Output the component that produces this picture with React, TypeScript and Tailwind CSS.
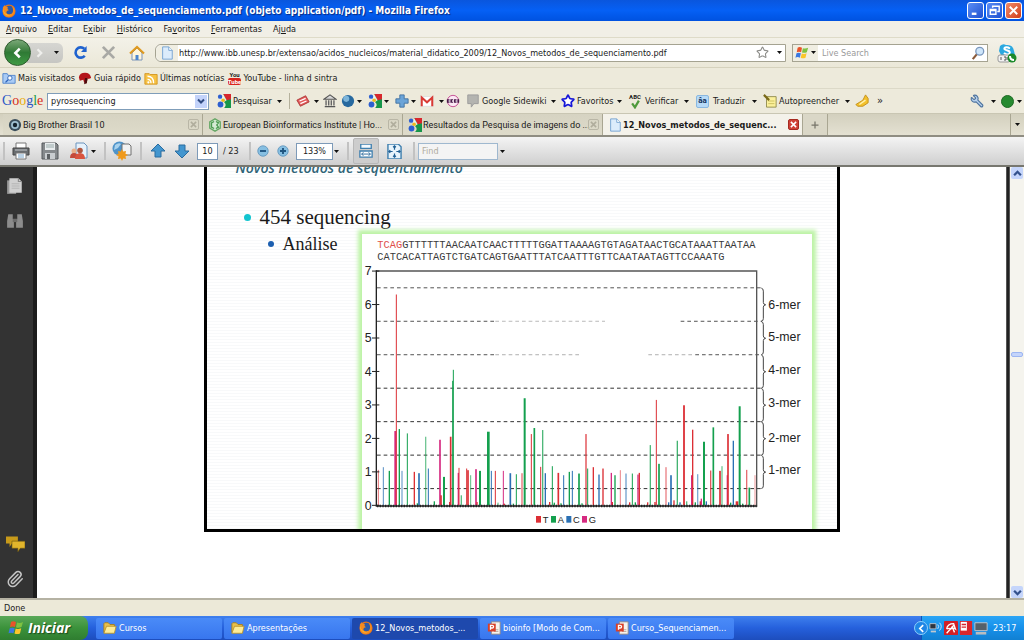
import type { ReactNode } from "react";
import { Paperclip, Star, Wrench } from "lucide-react";

type Base = "T" | "A" | "C" | "G";

const baseColor: Record<Base, string> = {
  T: "#dc2f35",
  A: "#14a04e",
  C: "#2a70b4",
  G: "#d62a80",
};

// [x, signal, bar width, base, opacity]
const bars: [number, number, number, Base, number?][] = [
  [49, 1.06, 3, "T", 0.7], [64, 1.14, 3, "C", 0.8], [82, 1.03, 4, "A"], [100, 2.22, 6, "G"], [103, 6.3, 3, "T"],
  [112, 2.28, 4, "A"], [120, 1.03, 4, "C", 0.6], [136, 2.15, 3, "A"], [157, 1, 4, "T"], [166, 0.06, 4, "A"],
  [171, 0.96, 5, "C"], [191, 2.05, 4, "A", 0.6], [199, 1.1, 3, "C"], [217, 0.12, 4, "A"], [234, 1.96, 5, "G"],
  [237, 0.3, 5, "T"], [246, 0.85, 6, "A"], [263, 0.1, 4, "T"], [266, 2.05, 5, "T"], [272, 3.72, 3, "A"],
  [274, 4.05, 3, "A"], [289, 0.97, 4, "G"], [291, 1.12, 3, "T"], [298, 0.3, 4, "A", 0.7], [314, 1.1, 3, "T"],
  [318, 1.05, 5, "T"], [326, 0.9, 3, "A", 0.7], [342, 1.08, 5, "G"], [345, 0.1, 4, "T"], [354, 1.03, 6, "A"],
  [379, 2.2, 8, "A"], [388, 1.03, 3, "C"], [400, 1.03, 3, "T"], [408, 0.08, 4, "A", 0.6], [424, 1.03, 3, "G"],
  [427, 0.05, 4, "T"], [445, 0.96, 5, "C"], [454, 0.05, 4, "A"], [463, 0.93, 3, "A"], [480, 0.96, 5, "T", 0.55],
  [488, 3.2, 6, "A"], [508, 2.13, 3, "T"], [517, 2.31, 5, "A"], [536, 1.15, 3, "T"], [542, 2.25, 4, "A", 0.75],
  [550, 0.96, 4, "C"], [563, 0.1, 4, "T"], [571, 1.17, 3, "A"], [577, 0.08, 4, "A"], [589, 0.97, 5, "T"],
  [597, 0.06, 4, "A"], [605, 0.9, 3, "C"], [622, 1, 4, "A"], [631, 1.03, 3, "C"], [651, 0.95, 5, "A"],
  [660, 0.06, 4, "A"], [672, 2.13, 6, "T", 0.6], [677, 1.1, 3, "A"], [694, 1.14, 4, "T"], [711, 0.92, 4, "C"],
  [723, 1.1, 4, "T"], [748, 0.97, 4, "G"], [751, 0.1, 4, "T"], [759, 0.9, 4, "A"], [775, 1.05, 3, "T", 0.6],
  [792, 0.95, 4, "C", 0.65], [803, 0.09, 4, "T"], [811, 0.95, 3, "A"], [820, 0.09, 4, "A"], [828, 0.92, 4, "G"],
  [832, 0.97, 4, "T"], [857, 0.09, 4, "T"], [865, 1.8, 4, "A", 0.75], [879, 0.1, 4, "T"], [883, 3.15, 3, "T"],
  [891, 1.24, 5, "A"], [912, 1.14, 4, "T", 0.6], [920, 0.09, 4, "C"], [927, 0.9, 5, "C"], [936, 0.15, 4, "T"],
  [946, 1.93, 4, "A", 0.8], [954, 0.09, 4, "C"], [966, 2.99, 6, "T", 0.9], [974, 0.12, 4, "A", 0.7],
  [989, 0.9, 4, "G"], [992, 2.26, 4, "T"], [1000, 0.09, 4, "A"], [1007, 0.93, 4, "C", 0.6], [1015, 0.12, 4, "T"],
  [1018, 0.2, 4, "G"], [1026, 1.9, 6, "A"], [1033, 0.12, 4, "C"], [1046, 1.04, 4, "T", 0.8], [1054, 2.33, 5, "A"],
  [1074, 1.03, 6, "T", 0.85], [1080, 1.17, 4, "A", 0.6], [1096, 0.9, 4, "G"], [1098, 2.13, 5, "T"],
  [1106, 0.08, 4, "A"], [1114, 1.93, 4, "C"], [1125, 0.12, 8, "T"], [1133, 2.96, 6, "A"], [1142, 0.05, 4, "A"],
  [1154, 1.06, 4, "T", 0.7], [1162, 0.53, 5, "A"], [1179, 0.9, 3, "T", 0.5],
];

const yOf = (v: number) => 814 - v * 100.4;

const merLabels = [
  { text: "6-mer", y: 226 },
  { text: "5-mer", y: 322 },
  { text: "4-mer", y: 419 },
  { text: "3-mer", y: 518 },
  { text: "2-mer", y: 623 },
  { text: "1-mer", y: 719 },
];

const legend: { base: Base; x: number }[] = [
  { base: "T", x: 522 },
  { base: "A", x: 567 },
  { base: "C", x: 613 },
  { base: "G", x: 660 },
];

function Pyrogram() {
  return (
    <svg viewBox="0 0 1350 885" className="block w-full">
      <g fontSize="31" fontFamily="'Liberation Mono', monospace" fill="#3a3a3a">
        <text x="46" y="41">
          <tspan fill="#e0504a">TCAG</tspan>GTTTTTTAACAATCAACTTTTTGGATTAAAAGTGTAGATAACTGCATAAATTAATAA
        </text>
        <text x="46" y="77">CATCACATTAGTCTGATCAGTGAATTTATCAATTTGTTCAATAATAGTTCCAAATG</text>
      </g>
      {/* threshold lines */}
      <g stroke="#555" strokeWidth="3" strokeDasharray="11 9">
        <path d={`M45 ${yOf(6.5)}H1200`} />
        <path d={`M45 ${yOf(5.5)}H400M956 ${yOf(5.5)}H1200`} />
        <path d={`M400 ${yOf(5.5)}H729`} opacity="0.4" />
        <path d={`M45 ${yOf(4.5)}H400M1000 ${yOf(4.5)}H1200`} />
        <path d={`M400 ${yOf(4.5)}H654M859 ${yOf(4.5)}H1000`} opacity="0.45" />
        {[3.5, 2.5, 1.5, 0.5].map((v) => (
          <path key={v} d={`M45 ${yOf(v)}H1200`} stroke="#333" />
        ))}
      </g>
      {bars.map(([x, v, w, base, o = 1], i) => (
        <rect key={i} x={x - w / 2} y={yOf(v)} width={w} height={814 - yOf(v)} fill={baseColor[base]} opacity={o} />
      ))}
      <path d="M43 111H1184V814" fill="none" stroke="#555" strokeWidth="4" />
      <path d="M43 109V816H1186" fill="none" stroke="#222" strokeWidth="4" />
      <path d="M45 816H1184" stroke="#222" strokeWidth="8" strokeDasharray="4 4" />
      <g fontSize="37" fontFamily="'Liberation Sans', sans-serif" fill="#222">
        {[0, 1, 2, 3, 4, 5, 6, 7].map((n) => (
          <g key={n}>
            <path d={`M30 ${yOf(n)}H52`} stroke="#222" strokeWidth="3" />
            <text x="8" y={yOf(n) + 13}>{n}</text>
          </g>
        ))}
        {merLabels.map((m, i) => {
          const top = yOf(6.5 - i);
          return (
            <g key={m.text}>
              <path
                d={`M1198 ${top + 1}q6 1 6 9v34q0 6 7 7q-7 1-7 7v34q0 8-6 8`}
                fill="none"
                stroke="#444"
                strokeWidth="3"
              />
              <text x="1219" y={m.y}>{m.text}</text>
            </g>
          );
        })}
      </g>
      <g fontSize="28" fontFamily="'Liberation Sans', sans-serif" fill="#222">
        {legend.map((l) => (
          <g key={l.base}>
            <rect x={l.x} y="846" width="15" height="20" fill={baseColor[l.base]} />
            <text x={l.x + 20} y="866">{l.base}</text>
          </g>
        ))}
      </g>
    </svg>
  );
}

/* ---------- icons ---------- */

function Caret({ className = "" }: { className?: string }) {
  return (
    <svg viewBox="0 0 5 3" className={`h-[3px] w-[5px] shrink-0 ${className}`}>
      <path d="M0 0h5L2.500 3z" fill="#111" />
    </svg>
  );
}

function Icon({ children, size = "size-[14px]", box = "0 0 16 16" }: { children: ReactNode; size?: string; box?: string }) {
  return (
    <svg viewBox={box} className={`${size} shrink-0`} fill="none">
      {children}
    </svg>
  );
}

function FirefoxIcon() {
  return (
    <Icon>
      <circle cx="8" cy="8" r="7.500" fill="#e8751a" />
      <circle cx="8.500" cy="7" r="5" fill="#2c5aa8" />
      <path d="M1 4c1-2 2-2 2-3 1 2 2 2 4 3-1 1-1 2 1 3-2 0-3 1-3 3 1 2 5 3 7 0 1-2 1-5-1-8 4 2 5 8 1 11-4 4-11 2-11-5z" fill="#f58a1f" />
      <path d="M1 5c1 5 5 9 10 7-4 3-10 0-10-7z" fill="#fbc02d" />
    </Icon>
  );
}

function GoogleIcon() {
  return (
    <Icon>
      <path d="M7 0h9v16H8c3-3 2-5 0-7z" fill="#17964a" />
      <path d="M7 0h9v6l-5 1z" fill="#d8272d" />
      <path d="M7 0l4 7-3 2-2-3z" fill="#fff" opacity="0.85" />
      <circle cx="3.500" cy="3" r="2.500" fill="#2d5fd0" />
      <circle cx="7" cy="7" r="2" fill="#f0b81c" />
      <circle cx="4" cy="12" r="3.300" fill="#2d5fd0" />
    </Icon>
  );
}

function PageIcon() {
  return (
    <Icon>
      <path d="M3 1h7l4 4v10H3z" fill="#dcecfb" stroke="#6f9fd0" />
      <path d="M10 1v4h4" fill="#fff" stroke="#6f9fd0" />
    </Icon>
  );
}

function FolderIcon() {
  return (
    <Icon>
      <path d="M1 3l1-1h4l2 2h5v9H1z" fill="#e9c04c" stroke="#a57e1a" />
      <path d="M4 6h11l-2 8H1z" fill="#fdec98" stroke="#b8922c" />
    </Icon>
  );
}

function PptIcon() {
  return (
    <Icon>
      <path d="M5 1h10v14H5z" fill="#f7f3ee" stroke="#9a8a80" />
      <path d="M8 10h5M8 12h5" stroke="#b5a59a" />
      <rect x="1" y="3" width="9" height="9" fill="#d8402a" />
      <path d="M4 10V5h2a1.500 1.500 0 010 3H4" stroke="#fff" strokeWidth="1.500" />
    </Icon>
  );
}

function WindowsFlag({ size }: { size?: string }) {
  return (
    <Icon size={size}>
      <path d="M3 2q2-1.500 5 0L7 7Q4.500 6 2 7z" fill="#e9532a" />
      <path d="M9 2.500q3 1 6-.5l-1.500 5q-3 1.500-5.500.3z" fill="#7fc241" />
      <path d="M1.700 8.300q2.500-1.300 5 0l-1.200 5q-2.500-1.300-5 0z" fill="#3b78e0" />
      <path d="M7.700 8.500q2.800 1.200 5.500-.2L12 13.500q-3 1.200-5.500 0z" fill="#fbc62a" />
    </Icon>
  );
}

/* ---------- browser chrome ---------- */

function TitleBar() {
  return (
    <header className="flex h-[21px] shrink-0 items-center gap-[4px] bg-linear-to-b from-[#0a56dd] via-[#0560f5] to-[#0052e0] px-[2px] text-[10px] font-bold text-white">
      <FirefoxIcon />
      <h1 className="flex-1 truncate [text-shadow:1px_1px_1px_#0a2a80]">
        12_Novos_metodos_de_sequenciamento.pdf (objeto application/pdf) - Mozilla Firefox
      </h1>
      <div className="flex gap-[2px]">
        <button aria-label="Minimizar" className="size-[17px] rounded-[3px] border border-white bg-linear-to-br from-[#5b8df5] to-[#1f4fd0]">
          <Icon size="size-[15px]"><path d="M4 11.500h5" stroke="#fff" strokeWidth="2.500" /></Icon>
        </button>
        <button aria-label="Restaurar" className="size-[17px] rounded-[3px] border border-white bg-linear-to-br from-[#5b8df5] to-[#1f4fd0]">
          <Icon size="size-[15px]"><path d="M6 5V3.500h7V9h-2M3.500 7h6v5h-6zM3.500 8h6" stroke="#fff" strokeWidth="1.500" /></Icon>
        </button>
        <button aria-label="Fechar" className="size-[17px] rounded-[3px] border border-white bg-linear-to-br from-[#f08a68] to-[#d03a12]">
          <Icon size="size-[15px]"><path d="M4 4l8 8M12 4l-8 8" stroke="#fff" strokeWidth="2" /></Icon>
        </button>
      </div>
    </header>
  );
}

const menus = [
  ["", "A", "rquivo"],
  ["", "E", "ditar"],
  ["E", "x", "ibir"],
  ["", "H", "istórico"],
  ["Fa", "v", "oritos"],
  ["", "F", "erramentas"],
  ["Aj", "u", "da"],
];

function MenuBar() {
  return (
    <nav className="flex h-[17px] shrink-0 items-center gap-[11px] border-b border-[#dedbc8] bg-[#f1efe6] px-[6px]">
      {menus.map(([pre, key, post]) => (
        <button key={pre + key + post}>
          {pre}<span className="underline">{key}</span>{post}
        </button>
      ))}
    </nav>
  );
}

function NavBar() {
  return (
    <div className="flex h-[30px] shrink-0 items-center border-b border-[#d6d2bd] bg-linear-to-b from-[#f3f1e8] to-[#ebe8d8] pr-[7px] pl-[4px]">
      <button aria-label="Voltar" className="z-10 flex size-[27px] items-center justify-center rounded-full border border-[#2d5a2d] bg-linear-to-b from-[#7aa878] via-[#2f7a35] to-[#3f9a44]">
        <Icon><path d="M10 3L5 8l5 5" stroke="#fff" strokeWidth="3" /></Icon>
      </button>
      <div className="-ml-[4px] flex h-[20px] w-[36px] items-center rounded-r-md bg-linear-to-b from-[#d6d6d2] to-[#c6c6c2]">
        <button aria-label="Avançar" className="flex w-[24px] justify-center">
          <Icon size="size-[12px]"><path d="M6 3l5 5-5 5" stroke="#efefec" strokeWidth="3" /></Icon>
        </button>
        <Caret className="ml-[3px]" />
      </div>
      <button aria-label="Recarregar" className="ml-[10px]">
        <Icon size="size-[15px]">
          <path d="M12.500 11.500a5.500 5.500 0 11-.5-7.500" stroke="#1f62cf" strokeWidth="2.800" />
          <path d="M14.500 1v6.500H8.500z" fill="#1f62cf" />
        </Icon>
      </button>
      <button aria-label="Parar" className="ml-[13px]">
        <Icon size="size-[15px]"><path d="M2 2l12 12M14 2L2 14" stroke="#a9a9a5" strokeWidth="3" /></Icon>
      </button>
      <button aria-label="Página inicial" className="ml-[13px]">
        <Icon size="size-[16px]">
          <path d="M3 8v7h10V8L8 3z" fill="#fff6dc" stroke="#7a93b8" />
          <path d="M1 8.500L8 2l7 6.500" stroke="#e09a1f" strokeWidth="2.200" />
          <path d="M6.500 10h3v5h-3z" fill="#4b86cf" />
        </Icon>
      </button>
      <div className="ml-[10px] flex h-[18px] flex-1 items-center rounded-l-md border border-[#a5a391] bg-white pr-[3px]">
        <div className="flex h-full items-center rounded-l-md bg-[#f0eee2] px-[4px]"><PageIcon /></div>
        <input
          aria-label="Endereço"
          className="ml-[1px] min-w-0 flex-1 bg-transparent outline-none"
          defaultValue="http://www.ibb.unesp.br/extensao/acidos_nucleicos/material_didatico_2009/12_Novos_metodos_de_sequenciamento.pdf"
        />
        <Star className="size-[13px] fill-white text-[#8c8c88]" strokeWidth={2} />
        <Caret className="ml-[8px]" />
      </div>
      <div className="ml-[6px] flex h-[18px] w-[196px] items-center border border-[#a5a391] bg-white pr-[2px]">
        <div className="flex h-full items-center bg-[#f0eee2] pr-[2px] pl-[2px]">
          <WindowsFlag />
          <Caret className="ml-[2px]" />
        </div>
        <input aria-label="Pesquisa" placeholder="Live Search" className="ml-[4px] min-w-0 flex-1 outline-none placeholder:text-[#9a9a9a]" />
        <Icon>
          <path d="M7 9L2 15" stroke="#8a5a3a" strokeWidth="2.500" />
          <circle cx="10" cy="6" r="4.500" fill="#cfe6fa" stroke="#7b98bd" strokeWidth="1.500" />
        </Icon>
      </div>
      <button aria-label="Skype" className="ml-[9px]">
        <Icon size="size-[20px]" box="0 0 20 20">
          <path d="M3 3q3-3 6-1 7-1 8 6l1 4H4L2 8z" fill="#2aa8e0" />
          <path d="M13 5.500C9 3 6 5 8 6.500s6 1 4.500 4c-1 1.500-4 1-5.500-.5" stroke="#fff" strokeWidth="2" />
          <rect x="1" y="12" width="12" height="7" rx="2" fill="#f2f2f2" stroke="#999" />
          <path d="M4 14v3M7 14h2v3H7M11 14v3" stroke="#555" />
          <circle cx="15" cy="15" r="4.500" fill="#1c8a2a" />
          <path d="M13 13q0 4 4 4" stroke="#fff" strokeWidth="2" />
        </Icon>
      </button>
    </div>
  );
}

function BookmarksBar() {
  return (
    <nav className="flex h-[21px] shrink-0 items-center gap-[3px] border-b border-[#dcd9c8] bg-[#edeadb] px-[2px]">
      <a href="#visitados" className="flex items-center gap-[2px]">
        <Icon>
          <path d="M1 3h5l1 2h8v9H1z" fill="#a9cbf5" stroke="#4a80cc" />
          <circle cx="9" cy="8" r="2.500" fill="#fff" stroke="#2c62b8" />
          <path d="M7 10l-3 3" stroke="#2c62b8" strokeWidth="1.500" />
        </Icon>
        Mais visitados
      </a>
      <a href="#guia" className="flex items-center gap-[2px]">
        <Icon>
          <path d="M1 7q1-5 7-5 6 0 7 6l-3 1-1-1-1 6-3-1-1-3-4 1z" fill="#b3141a" />
          <path d="M8 8l3 0-1 6-3 1z" fill="#4c0a0c" />
        </Icon>
        Guia rápido
      </a>
      <a href="#noticias" className="flex items-center gap-[2px]">
        <Icon>
          <path d="M1 3h5l1 1h8v11H1z" fill="#f6c244" stroke="#d2941c" />
          <path d="M4 6q7 0 7 8M4 9.500q4 0 4 4.500" stroke="#fff" strokeWidth="1.500" />
          <circle cx="5" cy="13" r="1.200" fill="#fff" />
        </Icon>
        Últimas notícias
      </a>
      <a href="#youtube" className="flex items-center gap-[2px]">
        <span className="flex w-[14px] flex-col items-center font-['Roboto',sans-serif] text-[6px] leading-[7px] font-bold">
          <span>You</span>
          <span className="rounded-xs bg-[#d9251d] text-white">Tube</span>
        </span>
        YouTube - linha d sintra
      </a>
    </nav>
  );
}

function GoogleBar() {
  return (
    <div className="flex h-[24px] shrink-0 items-center bg-[#edeadb] pr-[2px] pl-[2px]">
      <span className="w-[45px] font-['Liberation_Serif',serif] text-[14px] leading-[18px]">
        <span className="text-[#2a56c6]">G</span>
        <span className="text-[#d62d20]">o</span>
        <span className="text-[#e8ac0c]">o</span>
        <span className="text-[#2a56c6]">g</span>
        <span className="text-[#1e9a48]">l</span>
        <span className="text-[#d62d20]">e</span>
      </span>
      <div className="flex h-[17px] w-[162px] items-center border border-[#7f9db9] bg-white p-px">
        <input aria-label="Busca Google" defaultValue="pyrosequencing" className="min-w-0 flex-1 px-[2px] outline-none" />
        <button aria-label="Histórico de busca" className="flex h-full w-[12px] items-center justify-center bg-[#c3d3fa]">
          <Icon size="size-[8px]"><path d="M2 5l6 6 6-6" stroke="#2f4a80" strokeWidth="4" /></Icon>
        </button>
      </div>
      <button className="ml-[8px] flex w-[60px] items-center gap-[2px]">
        <GoogleIcon />
        Pesquisar
      </button>
      <Caret />
      <span className="ml-[7px] h-[16px] w-px bg-[#b5b19c]" />
      <button aria-label="Cupons" className="ml-[6px] flex items-center gap-[4px]">
        <Icon>
          <path d="M1 7l10-5 4 7-10 5z" fill="#e25a5a" stroke="#a33" />
          <path d="M4 8l7-3M5 11l7-3" stroke="#fff" strokeWidth="1.500" />
        </Icon>
        <Caret />
      </button>
      <button aria-label="PageRank" className="ml-[4px]">
        <Icon>
          <path d="M1 6l7-5 7 5zM2 14.500h12" fill="#d8d8d8" stroke="#555" strokeWidth="1.300" />
          <path d="M3.500 7v6M6.500 7v6M9.500 7v6M12.500 7v6" stroke="#666" strokeWidth="1.600" />
        </Icon>
      </button>
      <button aria-label="Earth" className="ml-[4px] flex items-center gap-[2px]">
        <Icon>
          <circle cx="8" cy="8" r="7" fill="#27699f" />
          <circle cx="6" cy="5.500" r="3.500" fill="#7db5da" />
        </Icon>
        <Caret />
      </button>
      <button aria-label="Google" className="ml-[6px] flex items-center gap-[2px]">
        <GoogleIcon />
        <Caret />
      </button>
      <button aria-label="Adicionar" className="ml-[6px] flex items-center gap-[2px]">
        <Icon><path d="M5.500 1h5v4.500H15v5h-4.500V15h-5v-4.500H1v-5h4.500z" fill="#6ba4d8" stroke="#3f6f9f" /></Icon>
        <Caret />
      </button>
      <button aria-label="Gmail" className="ml-[4px] flex items-center gap-[5px]">
        <Icon>
          <rect x="1" y="3" width="14" height="11" fill="#fff" stroke="#ddd" />
          <path d="M2 14V4l6 5.500L14 4v10" stroke="#d93a34" strokeWidth="2.300" />
        </Icon>
        <Caret />
      </button>
      <button aria-label="Orkut" className="ml-[2px]">
        <Icon>
          <circle cx="8" cy="8" r="6.500" fill="#fbe8f4" stroke="#c0408c" />
          <path d="M1 8h14" stroke="#4a1a4a" strokeWidth="4" strokeDasharray="3 1" />
          <path d="M3 8h1M7 8h1M11 8h1" stroke="#fff" strokeWidth="1.500" />
        </Icon>
      </button>
      <button className="ml-[6px] flex w-[85px] items-center gap-[2px]">
        <Icon><path d="M2 1h12v10H9l-3 4v-4H2z" fill="#b4b4b0" stroke="#999" /></Icon>
        Google Sidewiki
      </button>
      <Caret />
      <button className="ml-[5px] flex w-[56px] items-center gap-[2px]">
        <Star className="size-[14px] shrink-0 fill-white text-[#1717d8]" strokeWidth={3} />
        Favoritos
      </button>
      <Caret />
      <button className="ml-[6px] flex w-[56px] items-center gap-[3px]">
        <span className="flex w-[14px] shrink-0 flex-col items-center font-['Roboto',sans-serif] text-[6px] leading-[6px] font-bold">
          ABC
          <Icon size="size-[9px]"><path d="M2 6l5 7L14 1" stroke="#4f9a3c" strokeWidth="4" /></Icon>
        </span>
        Verificar
      </button>
      <Caret />
      <button className="ml-[7px] flex w-[56px] items-center gap-[4px]">
        <span className="flex size-[13px] shrink-0 items-center justify-center rounded-xs border border-[#8ab8e0] bg-[#b7daf7] font-['Roboto',sans-serif] text-[8px] font-bold text-[#12305a]">âa</span>
        Traduzir
      </button>
      <Caret />
      <button className="ml-[6px] flex w-[82px] items-center gap-[2px]">
        <Icon>
          <path d="M4 3h11v12H4z" fill="#fbf09a" stroke="#8d8748" />
          <path d="M6 8h7M6 11h7" stroke="#c9bd5c" />
          <path d="M1 1l6 6" stroke="#7a6a1a" strokeWidth="2.500" />
        </Icon>
        Autopreencher
      </button>
      <Caret />
      <button aria-label="Realçar" className="ml-[5px]">
        <Icon>
          <path d="M1 12L9 7l3-6 3 4v5l-6 4H3z" fill="#f3c12c" stroke="#c08c12" />
          <path d="M5 12l7-5" stroke="#fff3b0" strokeWidth="1.500" />
        </Icon>
      </button>
      <button className="ml-[8px] text-[11px]">»</button>
      <button aria-label="Configurações" className="ml-auto flex items-center gap-[7px]">
        <Wrench className="size-[14px] -scale-x-100 fill-[#b9d3ef] text-[#50759f]" />
        <Caret />
      </button>
      <button aria-label="Conta" className="ml-[5px] flex items-center gap-[3px]">
        <span className="size-[13px] rounded-full border border-[#1d6a24] bg-[#268a30]" />
        <Caret />
      </button>
    </div>
  );
}

interface TabProps {
  icon: ReactNode;
  title: string;
  active?: boolean;
}

function Tab({ icon, title, active }: TabProps) {
  return (
    <div
      className={`flex max-w-[200px] min-w-0 flex-1 items-center border-r border-[#a9a692] pr-[3px] pl-[5px] ${
        active ? "bg-[#f4f2ea] font-bold" : "bg-linear-to-b from-[#d6d3c2] to-[#dedbca] font-['Roboto',sans-serif]"
      }`}
    >
      <button role="tab" aria-selected={!!active} className="flex min-w-0 flex-1 items-center gap-px text-left">
        {icon}
        <span>{title}</span>
      </button>
      <button
        aria-label={`Fechar ${title}`}
        className={`flex size-[11px] shrink-0 items-center justify-center rounded-xs border ${
          active ? "border-[#a52a20] bg-[#cf4136] text-white" : "border-[#b9b6a6] text-[#b0ad9c]"
        }`}
      >
        <Icon size="size-[7px]"><path d="M2 2l12 12M14 2L2 14" stroke="currentColor" strokeWidth="3.500" /></Icon>
      </button>
    </div>
  );
}

function TabStrip() {
  return (
    <div role="tablist" className="flex h-[22px] shrink-0 border-t border-[#c9c6b3] bg-linear-to-b from-[#d3d0be] to-[#e4e1d2] pl-[3px]">
      <Tab
        title="Big Brother Brasil 10"
        icon={
          <Icon>
            <circle cx="8" cy="8" r="7" fill="#3b4f5c" />
            <circle cx="8" cy="8" r="4.500" fill="#9fc0d0" />
            <circle cx="8" cy="8" r="2.500" fill="#16242e" />
          </Icon>
        }
      />
      <Tab
        title="European Bioinformatics Institute | Ho..."
        icon={
          <Icon>
            <path d="M8 1l6 3.500v7L8 15l-6-3.500v-7z" fill="#d5ead5" stroke="#66a866" strokeWidth="1.500" />
            <path d="M7 4L4 5.500v5L7 12M9 4l3 1.500-2 2.500 2 2.500L9 12" stroke="#4a9a50" strokeWidth="1.500" />
          </Icon>
        }
      />
      <Tab title="Resultados da Pesquisa de imagens do ..." icon={<GoogleIcon />} />
      <Tab title="12_Novos_metodos_de_sequenc..." active icon={<PageIcon />} />
      <button aria-label="Nova aba" className="flex w-[25px] items-center justify-center border-r border-[#a9a692] bg-[#dad7c7]">
        <Icon size="size-[8px]"><path d="M8 1v14M1 8h14" stroke="#77756a" strokeWidth="2.500" /></Icon>
      </button>
      <button aria-label="Listar abas" className="ml-auto flex w-[14px] items-center justify-center border-l border-[#a9a692]">
        <Caret />
      </button>
    </div>
  );
}

/* ---------- pdf viewer ---------- */

function Grip({ className = "" }: { className?: string }) {
  return <span className={`h-[18px] w-[2px] shrink-0 bg-[#c2c2c2] ${className}`} />;
}

function PdfToolbar() {
  return (
    <div className="flex h-[32px] shrink-0 items-center border-t-2 border-b-2 border-t-[#8f8d82] border-b-[#77776f] bg-linear-to-b from-[#f4f4f4] to-[#cfcfcf]">
      <Grip className="ml-[3px]" />
      <button aria-label="Imprimir" className="ml-[7px]">
        <Icon size="size-[18px]" box="0 0 18 18">
          <path d="M4 1h10v6H4z" fill="#fff" stroke="#777" />
          <path d="M1 6h16v7H1z" fill="#696d70" stroke="#444" />
          <path d="M3 8h12" stroke="#c5c9cc" />
          <path d="M4 11h10v6H4z" fill="#fff" stroke="#777" />
          <path d="M6 13h6M6 15h6" stroke="#79a6cc" />
        </Icon>
      </button>
      <button aria-label="Salvar" className="ml-[11px]">
        <Icon size="size-[18px]" box="0 0 18 18">
          <path d="M1 1h14l2 2v14H1z" fill="#85898c" stroke="#55595c" />
          <path d="M4 1h10v7H4z" fill="#e8ecee" />
          <path d="M5 3h8M5 5h8" stroke="#9aa" />
          <path d="M4 11h10v6H4z" fill="#c9cdd0" />
          <path d="M6 12h3v5H6z" fill="#5c6063" />
        </Icon>
      </button>
      <button aria-label="Colaborar" className="ml-[11px] flex items-center gap-[3px]">
        <Icon size="size-[18px]" box="0 0 18 18">
          <path d="M6 1h8l3 3v12H6z" fill="#e6f1fb" stroke="#6a94bd" />
          <circle cx="4" cy="9" r="2.500" fill="#e9b08a" />
          <path d="M0 16q0-5 4-5t4 5z" fill="#c44a3a" />
          <circle cx="10" cy="8.500" r="2.800" fill="#b0563f" />
          <path d="M5 17q0-6 5-6t5 6z" fill="#d9543f" />
        </Icon>
        <Caret />
      </button>
      <Grip className="ml-[8px]" />
      <button aria-label="Criar PDF" className="ml-[6px]">
        <Icon size="size-[20px]" box="0 0 20 20">
          <circle cx="7.500" cy="7.500" r="7" fill="#4f93c9" />
          <path d="M3 4q4-3 6-1L6 7 2 9z" fill="#a8d2ee" />
          <path d="M10 3h7l2 2v9h-9z" fill="#f2f2f2" stroke="#707070" />
          <path d="M10 8l1.200 2.500 2.800-.5-.5 2.800L16 14l-2.500 1.200.5 2.800-2.800-.5L10 20l-1.200-2.500-2.800.5.5-2.800L4 14l2.500-1.200L6 10l2.800.5z" fill="#ef9a1d" />
        </Icon>
      </button>
      <Grip className="ml-[8px]" />
      <button aria-label="Página anterior" className="ml-[8px]">
        <Icon size="size-[16px]"><path d="M8 1l7 7h-4v6H5V8H1z" fill="#4396cf" stroke="#2a6c9f" /></Icon>
      </button>
      <button aria-label="Próxima página" className="ml-[8px]">
        <Icon size="size-[16px]"><path d="M8 15l7-7h-4V2H5v6H1z" fill="#4396cf" stroke="#2a6c9f" /></Icon>
      </button>
      <input aria-label="Página" defaultValue="10" className="ml-[7px] h-[17px] w-[21px] border border-[#7d9ab8] bg-white text-center outline-none" />
      <span className="ml-[5px] w-[26px] whitespace-pre">/ 23</span>
      <Grip />
      <button aria-label="Reduzir zoom" className="ml-[6px]">
        <Icon size="size-[12px]">
          <circle cx="8" cy="8" r="7" fill="#86bfe2" stroke="#5a8fb8" />
          <path d="M4 8h8" stroke="#1f5580" strokeWidth="2.500" />
        </Icon>
      </button>
      <button aria-label="Ampliar zoom" className="ml-[8px]">
        <Icon size="size-[12px]">
          <circle cx="8" cy="8" r="7" fill="#86bfe2" stroke="#5a8fb8" />
          <path d="M4 8h8M8 4v8" stroke="#1f5580" strokeWidth="2.500" />
        </Icon>
      </button>
      <select aria-label="Zoom" className="ml-[7px] h-[17px] w-[37px] appearance-none border border-[#7d9ab8] bg-white text-center">
        <option>133%</option>
      </select>
      <Caret className="ml-[1px]" />
      <Grip className="ml-[8px]" />
      <button aria-label="Ajustar largura" className="ml-[4px] flex size-[26px] items-center justify-center rounded-xs border border-[#b8b8b8] bg-[#cdcdcd]">
        <Icon>
          <path d="M2 0h12v5H2z" fill="#f5faff" stroke="#3f7fae" strokeWidth="1.500" />
          <path d="M1 8h14v7H1z" fill="#fff" stroke="#3f7fae" strokeWidth="1.500" />
          <path d="M3 11.500h10M5 9.500l-2 2 2 2M11 9.500l2 2-2 2" stroke="#1f5f94" />
        </Icon>
      </button>
      <button aria-label="Ajustar página" className="ml-[8px]">
        <Icon size="size-[15px]">
          <path d="M1 0h11l3 3v13H1z" fill="#e8f4fc" stroke="#3f7fae" strokeWidth="1.500" />
          <path d="M8 2v4M8 10v4M2 8h4M10 8h4M6.500 3.500L8 2l1.500 1.500M6.500 12.500L8 14l1.500-1.500M3.500 6.500L2 8l1.500 1.500M12.500 6.500L14 8l-1.500 1.500" stroke="#1f5f94" strokeWidth="1.300" />
        </Icon>
      </button>
      <Grip className="ml-[11px]" />
      <input aria-label="Localizar" placeholder="Find" className="ml-[3px] h-[17px] w-[80px] border border-[#9fb8cf] bg-[#f4f4f4] px-[3px] outline-none placeholder:text-[#b0aca0]" />
      <Caret className="ml-[2px]" />
    </div>
  );
}

function SidePanel() {
  return (
    <aside className="flex w-[37px] shrink-0 flex-col items-center border-r-4 border-[#1c1c1c] bg-[#333] pt-[10px] pr-[3px] pb-[10px]">
      <button aria-label="Páginas">
        <Icon size="size-[18px]">
          <path d="M1 3h8v12H1z" fill="#9a9a9a" />
          <path d="M3 1h8l3 3v10H3z" fill="#d0d0d0" />
          <path d="M11 1v3h3" stroke="#8a8a8a" />
          <path d="M5 6h7M5 8h7M5 10h7" stroke="#b5b5b5" />
        </Icon>
      </button>
      <button aria-label="Pesquisar" className="mt-[17px]">
        <Icon size="size-[18px]">
          <path d="M2 2h4v4l1 2v6H1V8zM10 2h4l1 6v6H9V8l1-2z" fill="#8c8c8c" />
          <path d="M6 6h4v3H6z" fill="#6c6c6c" />
        </Icon>
      </button>
      <button aria-label="Comentários" className="mt-auto">
        <Icon size="size-[19px]">
          <path d="M0 2h10v6H5l-2 3V8H0z" fill="#c79a1a" />
          <path d="M5 6h11v6h-4l-2 3v-3H5z" fill="#e2b52c" stroke="#6b5410" strokeWidth="0.500" />
        </Icon>
      </button>
      <button aria-label="Anexos" className="mt-[17px]">
        <Paperclip className="size-[18px] text-[#c4c4c4]" strokeWidth={2} />
      </button>
    </aside>
  );
}

function Slide() {
  return (
    <article className="flex h-[375px] w-[636px] shrink-0 flex-col overflow-hidden border-[3px] border-black bg-[repeating-linear-gradient(0deg,#f8f9fa_0px,#f8f9fa_1px,#fff_1px,#fff_3px)]">
      <h2 className="pl-[29px] font-['Open_Sans',sans-serif] text-[14px] leading-[16px] font-semibold text-[#2f6478] italic">
        Novos métodos de sequenciamento
      </h2>
      <p className="mt-[28px] flex items-center gap-[9px] pl-[37px] font-['Liberation_Serif',serif] text-[21px] leading-[26px]">
        <span className="size-[7px] rounded-full bg-[#12c4cf]" />
        454 sequencing
      </p>
      <div className="flex flex-1 items-start justify-between pr-[25px]">
        <p className="mt-[3px] flex items-center gap-[9px] pl-[61px] font-['Liberation_Serif',serif] text-[18px] leading-[22px]">
          <span className="size-[6px] rounded-full bg-[#1c5fb0]" />
          Análise
        </p>
        <figure className="mt-[4px] w-[450px] bg-white shadow-[0_0_4px_4px_#bdf3a6]">
          <Pyrogram />
        </figure>
      </div>
    </article>
  );
}

function Scrollbar() {
  return (
    <div className="flex w-[14px] shrink-0 flex-col items-center bg-[#f5f4ee]">
      <button aria-label="Rolar para cima" className="flex size-[12px] items-center justify-center rounded-xs bg-[#c5d5fb]">
        <Icon size="size-[9px]"><path d="M2 11l6-6 6 6" stroke="#33518c" strokeWidth="4" /></Icon>
      </button>
      <span className="grow-[43]" />
      <span className="h-[5px] w-[12px] rounded-xs border border-[#9db6f2] bg-[#c5d5fb]" />
      <span className="grow-[57]" />
      <button aria-label="Rolar para baixo" className="flex size-[12px] items-center justify-center rounded-xs bg-[#c5d5fb]">
        <Icon size="size-[9px]"><path d="M2 5l6 6 6-6" stroke="#33518c" strokeWidth="4" /></Icon>
      </button>
    </div>
  );
}

/* ---------- windows taskbar ---------- */

interface Task {
  title: string;
  icon: ReactNode;
  active?: boolean;
}

const tasks: Task[] = [
  { title: "Cursos", icon: <FolderIcon /> },
  { title: "Apresentações", icon: <FolderIcon /> },
  { title: "12_Novos_metodos_...", icon: <FirefoxIcon />, active: true },
  { title: "bioinfo [Modo de Com...", icon: <PptIcon /> },
  { title: "Curso_Sequenciamen...", icon: <PptIcon /> },
];

function Taskbar() {
  return (
    <footer className="flex h-[24px] shrink-0 items-stretch bg-linear-to-b from-[#3f80ee] via-[#2560dc] to-[#1d4dbd] text-white">
      <button className="flex w-[88px] items-center gap-[4px] rounded-r-lg bg-linear-to-b from-[#5aa858] via-[#3b923b] to-[#2f7d30] pl-[8px] font-['Open_Sans',sans-serif] text-[14px] font-bold italic [text-shadow:1px_1px_1px_#1c4a1c]">
        <WindowsFlag size="size-[16px]" />
        Iniciar
      </button>
      <div className="ml-[8px] flex min-w-0 flex-1 items-center gap-[2px]">
        {tasks.map((t) => (
          <button
            key={t.title}
            className={`flex h-[21px] w-[126px] min-w-0 items-center gap-[2px] rounded-xs pl-[7px] text-left ${
              t.active ? "bg-[#1e49ad]" : "bg-linear-to-b from-[#4a8bf8] to-[#3876ee]"
            }`}
          >
            {t.icon}
            <span>{t.title}</span>
          </button>
        ))}
      </div>
      <div className="flex w-[103px] items-center gap-px border-l border-[#0b57b5] bg-linear-to-b from-[#2aa5f5] via-[#1690ea] to-[#1180d2]">
        <button aria-label="Mostrar ícones ocultos" className="-ml-[8px] flex size-[14px] items-center justify-center rounded-full border border-[#8fd0fb] bg-[#1f86e6]">
          <Icon size="size-[9px]"><path d="M11 2L5 8l6 6" stroke="#fff" strokeWidth="3" /></Icon>
        </button>
        <Icon>
          <path d="M1 3h7v6H1z" fill="#2b3440" stroke="#c0c8d0" />
          <path d="M2 12h6" stroke="#c0c8d0" strokeWidth="2" />
          <path d="M10 4q2 2 0 5M12 2q4 4 0 9" stroke="#dfefff" />
        </Icon>
        <Icon>
          <rect width="16" height="16" rx="1" fill="#d21f26" />
          <path d="M3 9q1-6 8-6l2 6q-3-2-5 0-2-1-5 0M9 6l3 7M3 14L12 4" stroke="#fff" strokeWidth="1.500" />
        </Icon>
        <Icon>
          <rect x="1" width="14" height="16" fill="#d8262c" />
          <path d="M2 1h7v10H2z" fill="#fff" />
          <path d="M3 4h5M3 7h5" stroke="#d8262c" strokeWidth="1.500" />
        </Icon>
        <Icon>
          <path d="M1 2h14v9H1z" fill="#55606a" stroke="#c9ced2" />
          <path d="M2 14h12" stroke="#b8bcc0" strokeWidth="3" />
        </Icon>
        <time className="ml-[4px]">23:17</time>
      </div>
    </footer>
  );
}

export default function App() {
  return (
    <div className="flex h-screen flex-col overflow-hidden bg-[#edeadb] font-['DejaVu_Sans_Condensed','DejaVu_Sans',sans-serif] text-[9px] leading-[12px] whitespace-nowrap text-[#1a1a1a]">
      <TitleBar />
      <MenuBar />
      <NavBar />
      <BookmarksBar />
      <GoogleBar />
      <TabStrip />
      <PdfToolbar />
      <div className="flex min-h-0 flex-1">
        <SidePanel />
        <main className="flex flex-1 justify-center overflow-hidden bg-white">
          <div className="-mt-[10px]">
            <Slide />
          </div>
        </main>
        <div className="w-[4px] shrink-0 border-r border-l border-[#555] bg-[#222]" />
        <Scrollbar />
      </div>
      <p className="flex h-[18px] shrink-0 items-center border-t-2 border-[#b5b2a3] bg-[#ece9d8] px-[4px]">Done</p>
      <Taskbar />
    </div>
  );
}
